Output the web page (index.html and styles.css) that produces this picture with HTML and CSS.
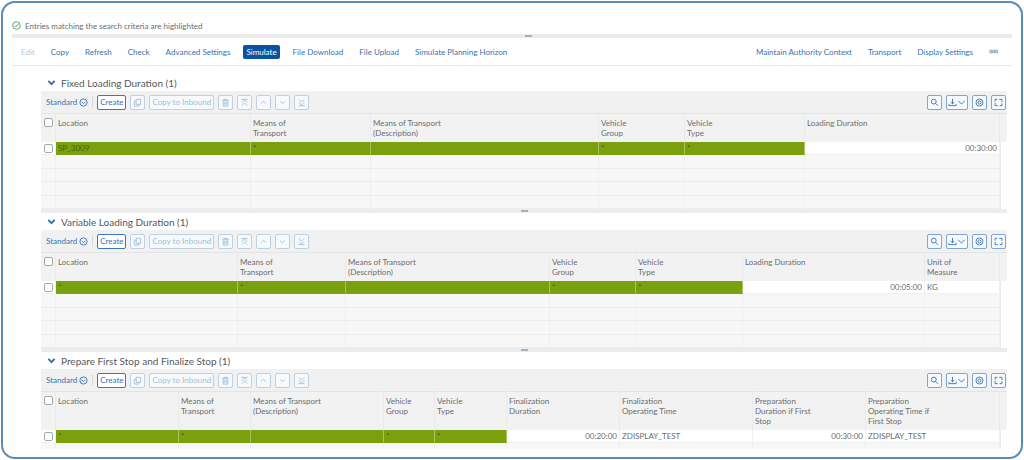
FILE: index.html
```
<!DOCTYPE html>
<html lang="en">
<head>
<meta charset="utf-8">
<title>Loading and Unloading Duration</title>
<link rel="stylesheet" href="styles.css">
</head>
<body>
<svg class="sprite" aria-hidden="true">
  <symbol id="i-ok" viewBox="0 0 10 10"><circle cx="5" cy="5" r="4.2"/><path d="M2.8 5.2l1.5 1.6L7.4 3"/></symbol>
  <symbol id="i-chev" viewBox="0 0 10 10"><path d="M1.5 3.2L5 6.8l3.500-3.600"/></symbol>
  <symbol id="i-circle-down" viewBox="0 0 10 10"><circle cx="5" cy="5" r="4"/><path d="M3 4.300l2 2 2-2"/></symbol>
  <symbol id="i-copy" viewBox="0 0 10 10"><path d="M3.500 1.500h5v5.500h-5zM3.500 3.500h-2v5.500h5V7"/></symbol>
  <symbol id="i-trash" viewBox="0 0 10 10"><path d="M1.500 2.500h7M3.500 2.500v-1h3v1M2.500 2.500v6.500h5V2.500M4.200 4v3.500M5.800 4v3.500"/></symbol>
  <symbol id="i-top" viewBox="0 0 10 10"><path d="M1.500 1.500h7M2 5.200l3-3 3 3M2 8.500l3-3 3 3"/></symbol>
  <symbol id="i-up" viewBox="0 0 10 10"><path d="M2.500 6L5 3.800 7.500 6"/></symbol>
  <symbol id="i-down" viewBox="0 0 10 10"><path d="M2.500 4L5 6.200 7.500 4"/></symbol>
  <symbol id="i-bottom" viewBox="0 0 10 10"><path d="M1.500 8.500h7M2 4.800l3 3 3-3M2 1.500l3 3 3-3"/></symbol>
  <symbol id="i-search" viewBox="0 0 10 10"><circle cx="4.200" cy="4" r="2.700"/><path d="M6.200 6L9 8.800"/></symbol>
  <symbol id="i-export" viewBox="0 0 10 10"><path d="M5 1v5.500M3 4.500l2 2 2-2M1 6.500v2h8v-2"/></symbol>
  <symbol id="i-gear" viewBox="0 0 10 10"><circle cx="5" cy="5" r="3.900"/><circle cx="5" cy="5" r="1.700"/></symbol>
  <symbol id="i-full" viewBox="0 0 10 10"><path d="M5.800 1.500h3v3M4.200 8.500h-3v-3M1.200 4V1.500h2.500M8.800 6v2.500H6.300"/></symbol>
  <symbol id="i-more" viewBox="0 0 10 10"><path d="M1 3.500h2v3H1zM4.200 3.500h2v3h-2zM7.400 3.500h2v3h-2zM3 5h1.200M6.200 5h1.200"/></symbol>
</svg>

<main class="frame">
  <p class="message" role="status"><svg class="icon ok"><use href="#i-ok"/></svg>Entries matching the search criteria are highlighted</p>
  <div class="splitter splitter-main"></div>

  <nav class="actions">
    <button class="action" disabled>Edit</button>
    <button class="action">Copy</button>
    <button class="action">Refresh</button>
    <button class="action">Check</button>
    <button class="action">Advanced Settings</button>
    <button class="action active">Simulate</button>
    <button class="action">File Download</button>
    <button class="action">File Upload</button>
    <button class="action">Simulate Planning Horizon</button>
    <span class="spacer"></span>
    <button class="action">Maintain Authority Context</button>
    <button class="action">Transport</button>
    <button class="action">Display Settings</button>
    <button class="action more" aria-label="More"><svg class="icon"><use href="#i-more"/></svg></button>
  </nav>

  <div class="sections">
    <section class="panel">
      <h2 class="title"><svg class="icon"><use href="#i-chev"/></svg>Fixed Loading Duration (1)</h2>
      <div class="toolbar">
        <button class="variant">Standard<svg class="icon"><use href="#i-circle-down"/></svg></button>
        <span class="divider"></span>
        <button class="btn create">Create</button>
        <button class="btn square" disabled aria-label="Copy"><svg class="icon"><use href="#i-copy"/></svg></button>
        <button class="btn" disabled>Copy to Inbound</button>
        <button class="btn square" disabled aria-label="Delete"><svg class="icon"><use href="#i-trash"/></svg></button>
        <button class="btn square" disabled aria-label="Move to top"><svg class="icon"><use href="#i-top"/></svg></button>
        <button class="btn square" disabled aria-label="Move up"><svg class="icon"><use href="#i-up"/></svg></button>
        <button class="btn square" disabled aria-label="Move down"><svg class="icon"><use href="#i-down"/></svg></button>
        <button class="btn square" disabled aria-label="Move to bottom"><svg class="icon"><use href="#i-bottom"/></svg></button>
        <span class="spacer"></span>
        <button class="btn square" aria-label="Search"><svg class="icon"><use href="#i-search"/></svg></button>
        <button class="btn export" aria-label="Export"><svg class="icon"><use href="#i-export"/></svg><svg class="icon"><use href="#i-chev"/></svg></button>
        <button class="btn square" aria-label="Settings"><svg class="icon"><use href="#i-gear"/></svg></button>
        <button class="btn square" aria-label="Full screen"><svg class="icon"><use href="#i-full"/></svg></button>
      </div>
      <table class="grid">
        <colgroup><col style="width:15px"><col style="width:195px"><col style="width:120px"><col style="width:228px"><col style="width:86px"><col style="width:120px"><col><col style="width:7px"></colgroup>
        <thead><tr>
          <th><input type="checkbox" class="check" aria-label="Select all"></th>
          <th>Location</th><th>Means of<br>Transport</th><th>Means of Transport<br>(Description)</th><th>Vehicle<br>Group</th><th>Vehicle<br>Type</th><th>Loading Duration</th><th></th>
        </tr></thead>
        <tbody>
          <tr class="data"><td><input type="checkbox" class="check" aria-label="Select row"></td><td class="hit">SP_3009</td><td class="hit">*</td><td class="hit"></td><td class="hit">*</td><td class="hit">*</td><td class="num">00:30:00</td><td></td></tr>
          <tr><td></td><td></td><td></td><td></td><td></td><td></td><td></td><td></td></tr>
          <tr><td></td><td></td><td></td><td></td><td></td><td></td><td></td><td></td></tr>
          <tr><td></td><td></td><td></td><td></td><td></td><td></td><td></td><td></td></tr>
          <tr><td></td><td></td><td></td><td></td><td></td><td></td><td></td><td></td></tr>
        </tbody>
      </table>
      <div class="splitter"></div>
    </section>

    <section class="panel">
      <h2 class="title"><svg class="icon"><use href="#i-chev"/></svg>Variable Loading Duration (1)</h2>
      <div class="toolbar">
        <button class="variant">Standard<svg class="icon"><use href="#i-circle-down"/></svg></button>
        <span class="divider"></span>
        <button class="btn create">Create</button>
        <button class="btn square" disabled aria-label="Copy"><svg class="icon"><use href="#i-copy"/></svg></button>
        <button class="btn" disabled>Copy to Inbound</button>
        <button class="btn square" disabled aria-label="Delete"><svg class="icon"><use href="#i-trash"/></svg></button>
        <button class="btn square" disabled aria-label="Move to top"><svg class="icon"><use href="#i-top"/></svg></button>
        <button class="btn square" disabled aria-label="Move up"><svg class="icon"><use href="#i-up"/></svg></button>
        <button class="btn square" disabled aria-label="Move down"><svg class="icon"><use href="#i-down"/></svg></button>
        <button class="btn square" disabled aria-label="Move to bottom"><svg class="icon"><use href="#i-bottom"/></svg></button>
        <span class="spacer"></span>
        <button class="btn square" aria-label="Search"><svg class="icon"><use href="#i-search"/></svg></button>
        <button class="btn export" aria-label="Export"><svg class="icon"><use href="#i-export"/></svg><svg class="icon"><use href="#i-chev"/></svg></button>
        <button class="btn square" aria-label="Settings"><svg class="icon"><use href="#i-gear"/></svg></button>
        <button class="btn square" aria-label="Full screen"><svg class="icon"><use href="#i-full"/></svg></button>
      </div>
      <table class="grid">
        <colgroup><col style="width:15px"><col style="width:182px"><col style="width:108px"><col style="width:204px"><col style="width:86px"><col style="width:107px"><col><col style="width:75px"><col style="width:7px"></colgroup>
        <thead><tr>
          <th><input type="checkbox" class="check" aria-label="Select all"></th>
          <th>Location</th><th>Means of<br>Transport</th><th>Means of Transport<br>(Description)</th><th>Vehicle<br>Group</th><th>Vehicle<br>Type</th><th>Loading Duration</th><th>Unit of<br>Measure</th><th></th>
        </tr></thead>
        <tbody>
          <tr class="data"><td><input type="checkbox" class="check" aria-label="Select row"></td><td class="hit">*</td><td class="hit">*</td><td class="hit"></td><td class="hit">*</td><td class="hit">*</td><td class="num">00:05:00</td><td>KG</td><td></td></tr>
          <tr><td></td><td></td><td></td><td></td><td></td><td></td><td></td><td></td><td></td></tr>
          <tr><td></td><td></td><td></td><td></td><td></td><td></td><td></td><td></td><td></td></tr>
          <tr><td></td><td></td><td></td><td></td><td></td><td></td><td></td><td></td><td></td></tr>
          <tr><td></td><td></td><td></td><td></td><td></td><td></td><td></td><td></td><td></td></tr>
        </tbody>
      </table>
      <div class="splitter"></div>
    </section>

    <section class="panel">
      <h2 class="title"><svg class="icon"><use href="#i-chev"/></svg>Prepare First Stop and Finalize Stop (1)</h2>
      <div class="toolbar">
        <button class="variant">Standard<svg class="icon"><use href="#i-circle-down"/></svg></button>
        <span class="divider"></span>
        <button class="btn create">Create</button>
        <button class="btn square" disabled aria-label="Copy"><svg class="icon"><use href="#i-copy"/></svg></button>
        <button class="btn" disabled>Copy to Inbound</button>
        <button class="btn square" disabled aria-label="Delete"><svg class="icon"><use href="#i-trash"/></svg></button>
        <button class="btn square" disabled aria-label="Move to top"><svg class="icon"><use href="#i-top"/></svg></button>
        <button class="btn square" disabled aria-label="Move up"><svg class="icon"><use href="#i-up"/></svg></button>
        <button class="btn square" disabled aria-label="Move down"><svg class="icon"><use href="#i-down"/></svg></button>
        <button class="btn square" disabled aria-label="Move to bottom"><svg class="icon"><use href="#i-bottom"/></svg></button>
        <span class="spacer"></span>
        <button class="btn square" aria-label="Search"><svg class="icon"><use href="#i-search"/></svg></button>
        <button class="btn export" aria-label="Export"><svg class="icon"><use href="#i-export"/></svg><svg class="icon"><use href="#i-chev"/></svg></button>
        <button class="btn square" aria-label="Settings"><svg class="icon"><use href="#i-gear"/></svg></button>
        <button class="btn square" aria-label="Full screen"><svg class="icon"><use href="#i-full"/></svg></button>
      </div>
      <table class="grid">
        <colgroup><col style="width:15px"><col style="width:123px"><col style="width:72px"><col style="width:133px"><col style="width:51px"><col style="width:72px"><col style="width:113px"><col style="width:133px"><col style="width:113px"><col><col style="width:7px"></colgroup>
        <thead><tr>
          <th><input type="checkbox" class="check" aria-label="Select all"></th>
          <th>Location</th><th>Means of<br>Transport</th><th>Means of Transport<br>(Description)</th><th>Vehicle<br>Group</th><th>Vehicle<br>Type</th><th>Finalization<br>Duration</th><th>Finalization<br>Operating Time</th><th>Preparation<br>Duration if First<br>Stop</th><th>Preparation<br>Operating Time if<br>First Stop</th><th></th>
        </tr></thead>
        <tbody>
          <tr class="data"><td><input type="checkbox" class="check" aria-label="Select row"></td><td class="hit">*</td><td class="hit">*</td><td class="hit"></td><td class="hit">*</td><td class="hit">*</td><td class="num">00:20:00</td><td>ZDISPLAY_TEST</td><td class="num">00:30:00</td><td>ZDISPLAY_TEST</td><td></td></tr>
          <tr class="cut"><td></td><td></td><td></td><td></td><td></td><td></td><td></td><td></td><td></td><td></td><td></td></tr>
        </tbody>
      </table>
    </section>
  </div>
</main>
</body>
</html>
```
FILE: styles.css
```
* { box-sizing: border-box; }

body {
  margin: 0;
  padding: 1px;
  background: #fff;
  color: #6a6d70;
  font: 8px/10px Lato, "Open Sans", sans-serif;
}

button { font: inherit; margin: 0; cursor: pointer; }

.sprite { position: absolute; width: 0; height: 0; }

.icon {
  width: 9px;
  height: 9px;
  flex: none;
  fill: none;
  stroke: currentColor;
  stroke-width: 1;
}

.frame {
  min-height: calc(100vh - 2px);
  padding: 16px 9px 0;
  border: 2px solid #5b8bb0;
  border-radius: 14px;
}

.message {
  display: flex;
  align-items: center;
  gap: 4px;
  height: 13px;
  margin: 0 0 2px;
}

.ok { color: #4f9f68; }

.splitter {
  display: flex;
  justify-content: center;
  align-items: center;
  height: 4px;
  background: #ececec;
}

.splitter::after {
  content: "";
  width: 7px;
  height: 2px;
  background: #9db4c6;
}

.splitter-main { padding-left: 32px; }

.actions {
  display: flex;
  align-items: center;
  gap: 10px;
  height: 28px;
  padding: 0 11px 0 6px;
  border-bottom: 1px solid #e8e8e8;
}

.action {
  height: 14px;
  padding: 0 3px;
  border: 0;
  border-radius: 2px;
  background: none;
  color: #3a72ae;
  line-height: 14px;
  white-space: nowrap;
}

.action:disabled { color: #b4c9df; }
.action.active { background: #0854a0; color: #fff; }
.action.more { display: flex; align-items: center; color: #7f9fc2; }

.spacer { flex: 1; }

.sections { padding: 8px 5px 0 29px; }

.title {
  display: flex;
  align-items: center;
  gap: 5px;
  height: 17px;
  margin: 0;
  padding-left: 6px;
  color: #55585b;
  font-size: 10px;
  font-weight: 400;
}

.title .icon { color: #2f6dad; stroke-width: 2; }

.toolbar {
  display: flex;
  align-items: center;
  gap: 4px;
  height: 22px;
  padding: 0 1px 0 5px;
  background: #f1f1f1;
}

.variant {
  display: flex;
  align-items: center;
  gap: 2px;
  padding: 0;
  border: 0;
  background: none;
  color: #3a72ae;
}

.divider { width: 1px; height: 12px; background: #d9d9d9; }

.btn {
  display: flex;
  align-items: center;
  justify-content: center;
  height: 15px;
  padding: 0 2px;
  border: 1px solid #7fa6cd;
  border-radius: 2px;
  background: #f7fafd;
  color: #3a72ae;
  white-space: nowrap;
}

.btn:disabled { border-color: #bfd0e2; color: #a3bcd6; }
.btn.create { border-color: #3a78b8; background: #fff; }
.btn.square { width: 15px; padding: 0; }
.btn.export { width: 22px; }

.grid {
  width: 100%;
  table-layout: fixed;
  border-collapse: separate;
  border-spacing: 0;
}

.grid th {
  height: 29px;
  padding: 4px 2px;
  border-top: 1px solid #e4e4e4;
  border-right: 1px solid #eaeaea;
  background: #f2f2f2;
  font-weight: 400;
  text-align: left;
  vertical-align: top;
  white-space: nowrap;
}

.grid td {
  height: 13px;
  padding: 0 2px;
  border-right: 1px solid #f0f0f0;
  border-bottom: 1px solid #ececec;
  background: #f7f7f7;
  line-height: 12px;
  white-space: nowrap;
}

.grid tr:nth-child(even) td { height: 14px; }
.grid .data td { background: #fff; border-bottom-color: #f0f0f0; }
.grid .cut td, .grid tr.cut:nth-child(even) td { height: 6px; border-bottom: 0; }

.grid .data .hit {
  border-right-color: #a9c45c;
  border-bottom-color: #7aa00e;
  background: #7aa00e;
  color: #47620c;
}

.grid .num { text-align: right; }

.grid td:last-child {
  border: 0;
  border-left: 1px solid #ececec;
  background: #fff;
}

.grid th:last-child { border-right: 0; }

.grid th:first-child, .grid td:first-child { padding-left: 3px; padding-right: 0; }

.check {
  display: block;
  width: 9px;
  height: 9px;
  margin: 0;
  appearance: none;
  border: 1px solid #a5a8ab;
  border-radius: 2px;
  background: #fff;
}
```
